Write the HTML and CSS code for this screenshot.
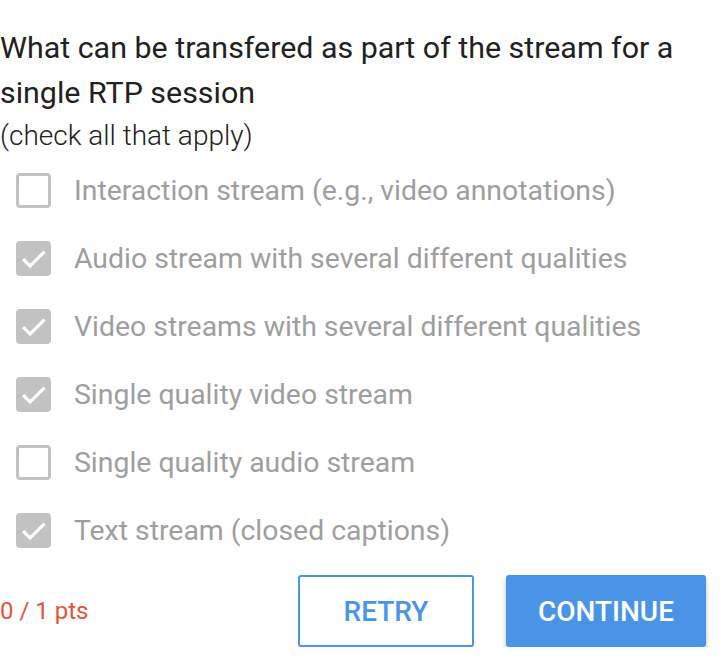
FILE: index.html
```html
<!DOCTYPE html>
<html lang="en">
<head>
    <meta charset="UTF-8">
    <title>Quiz</title>
    <link rel="stylesheet" href="styles.css">
</head>
<body>
    <div class="question">
        <h2 class="question-title">What can be transfered as part of the stream for a single RTP session</h2>
        <p class="question-hint">(check all that apply)</p>
        <ul class="options">
            <li class="option"><span class="box"></span><span class="label">Interaction stream (e.g., video annotations)</span></li>
            <li class="option checked"><span class="box"><svg viewBox="0 0 24 24"><path d="M4.5 12.5l5 5L20 7"/></svg></span><span class="label">Audio stream with several different qualities</span></li>
            <li class="option checked"><span class="box"><svg viewBox="0 0 24 24"><path d="M4.5 12.5l5 5L20 7"/></svg></span><span class="label">Video streams with several different qualities</span></li>
            <li class="option checked"><span class="box"><svg viewBox="0 0 24 24"><path d="M4.5 12.5l5 5L20 7"/></svg></span><span class="label">Single quality video stream</span></li>
            <li class="option"><span class="box"></span><span class="label">Single quality audio stream</span></li>
            <li class="option checked"><span class="box"><svg viewBox="0 0 24 24"><path d="M4.5 12.5l5 5L20 7"/></svg></span><span class="label">Text stream (closed captions)</span></li>
        </ul>
        <div class="footer">
            <span class="score">0 / 1 pts</span>
            <div class="actions">
                <button class="btn btn-outline">Retry</button>
                <button class="btn btn-primary">Continue</button>
            </div>
        </div>
    </div>
</body>
</html>
```

FILE: styles.css
```css
body {
    margin: 0;
    padding: 0;
    background: #fff;
    font-family: Roboto, "Noto Sans", sans-serif;
}

.question {
    width: 726px;
    padding-top: 25px;
}

.question-title {
    margin: 0;
    font-size: 30.4px;
    font-weight: 400;
    line-height: 45px;
    color: #212121;
}

.question-hint {
    margin: 0;
    font-size: 28px;
    font-weight: 300;
    line-height: 41px;
    color: #212121;
}

/* checkbox list */
.options {
    list-style: none;
    margin: 0;
    padding: 0;
}

.option {
    display: flex;
    align-items: center;
    gap: 23px;
    height: 68px;
    padding-left: 16px;
}

.box {
    box-sizing: border-box;
    flex-shrink: 0;
    width: 35px;
    height: 35px;
    border: 3px solid #c2c2c2;
    border-radius: 4px;
    display: flex;
    align-items: center;
    justify-content: center;
}

.option.checked .box {
    background: #c2c2c2;
}

.box svg {
    flex-shrink: 0;
    width: 33px;
    height: 33px;
    fill: none;
    stroke: #fff;
    stroke-width: 2.3;
}

.label {
    font-size: 28.4px;
    color: #9e9e9e;
}

/* bottom bar */
.footer {
    display: flex;
    justify-content: space-between;
    align-items: center;
    margin-top: 11px;
}

.score {
    color: #e5533d;
    font-size: 24px;
}

.actions {
    display: flex;
    gap: 32px;
    padding-right: 20px;
}

.btn {
    height: 72px;
    font-family: Roboto, sans-serif;
    font-size: 28px;
    font-weight: 500;
    text-transform: uppercase;
    border-radius: 3px;
    cursor: pointer;
}

.btn-outline {
    width: 176px;
    background: #fff;
    color: #4a94e8;
    border: 2px solid #4a94e8;
}

.btn-primary {
    width: 200px;
    background: #4a94e8;
    color: #fff;
    border: none;
    box-shadow: 0 3px 5px rgba(0, 0, 0, 0.25);
}
```
